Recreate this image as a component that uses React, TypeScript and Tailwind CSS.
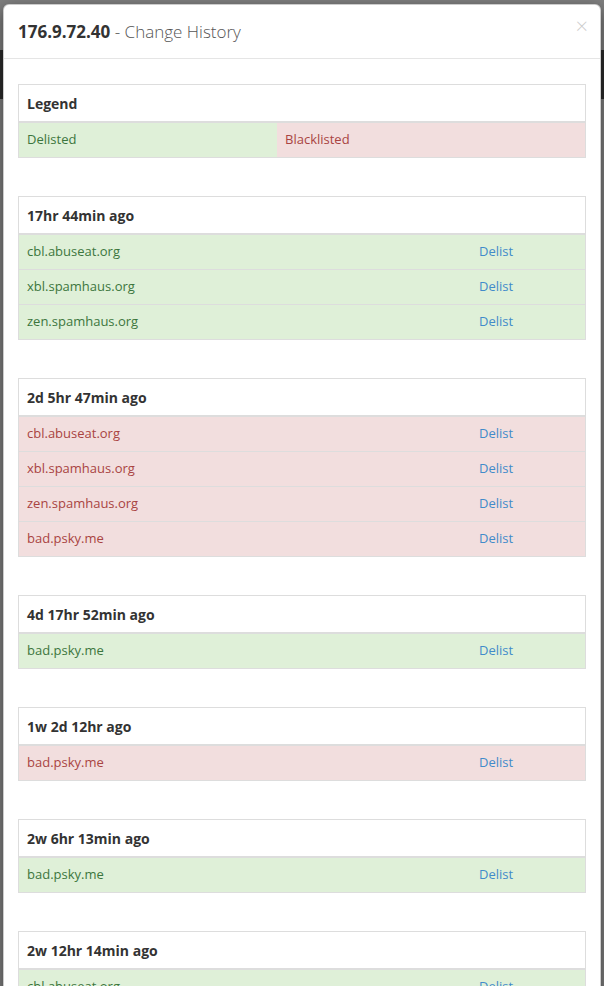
import React from "react";

type Status = "ok" | "bad";

type Entry = {
  when: string;
  status: Status;
  lists: string[];
};

const history: Entry[] = [
  {
    when: "17hr 44min ago",
    status: "ok",
    lists: ["cbl.abuseat.org", "xbl.spamhaus.org", "zen.spamhaus.org"],
  },
  {
    when: "2d 5hr 47min ago",
    status: "bad",
    lists: ["cbl.abuseat.org", "xbl.spamhaus.org", "zen.spamhaus.org", "bad.psky.me"],
  },
  { when: "4d 17hr 52min ago", status: "ok", lists: ["bad.psky.me"] },
  { when: "1w 2d 12hr ago", status: "bad", lists: ["bad.psky.me"] },
  { when: "2w 6hr 13min ago", status: "ok", lists: ["bad.psky.me"] },
  { when: "2w 12hr 14min ago", status: "ok", lists: ["cbl.abuseat.org"] },
];

const rowTone: Record<Status, string> = {
  ok: "bg-[#dff0d8] text-[#3c763d]",
  bad: "bg-[#f2dede] text-[#a94442]",
};

const Panel = ({
  title,
  children,
}: {
  title: string;
  children: React.ReactNode;
}) => (
  <div className="mb-[38px] border border-[#dddddd]">
    <div className="flex h-[38px] items-center border-b-2 border-[#dddddd] px-[8px] text-[14px] font-bold text-[#333333]">
      {title}
    </div>
    {children}
  </div>
);

export default function App() {
  return (
    <div
      className="relative h-[986px] overflow-hidden bg-[#7f7f7f] text-[13px]"
      style={{ fontFamily: '"Open Sans", "Liberation Sans", sans-serif' }}
    >
      {/* page behind the overlay */}
      <div className="mt-[50px] h-[49px] bg-[#2c2c2c]" />

      {/* modal */}
      <div className="absolute left-[3px] right-[3px] top-[4px] rounded-[6px] border border-black/20 bg-white shadow-[0_5px_15px_rgba(0,0,0,0.5)]">
        <div className="flex h-[54px] items-center justify-between border-b border-[#e5e5e5] pl-[14px] pr-[12px]">
          <h4 className="text-[17px] leading-[20px] text-[#333333]">
            <span className="font-bold">176.9.72.40</span>
            <span className="font-light text-[#555555]"> - Change History</span>
          </h4>
          <span className="-mt-[14px] text-[22px] font-light leading-none text-black opacity-20">
            ×
          </span>
        </div>

        <div className="px-[14px] pt-[25px]">
          <Panel title="Legend">
            <div className="flex h-[34px]">
              <div className="flex w-[258px] items-center bg-[#dff0d8] px-[8px] text-[#3c763d]">
                Delisted
              </div>
              <div className="flex flex-1 items-center bg-[#f2dede] px-[8px] text-[#a94442]">
                Blacklisted
              </div>
            </div>
          </Panel>

          {history.map((entry) => (
            <Panel key={entry.when} title={entry.when}>
              {entry.lists.map((list, i) => (
                <div
                  key={list}
                  className={`flex h-[34px] items-center ${rowTone[entry.status]} ${
                    i > 0 ? "box-content border-t border-[#dddddd]" : ""
                  }`}
                >
                  <div className="w-[452px] px-[8px]">{list}</div>
                  <a href="#" className="px-[8px] text-[#428bca]">
                    Delist
                  </a>
                </div>
              ))}
            </Panel>
          ))}
        </div>
      </div>
    </div>
  );
}
